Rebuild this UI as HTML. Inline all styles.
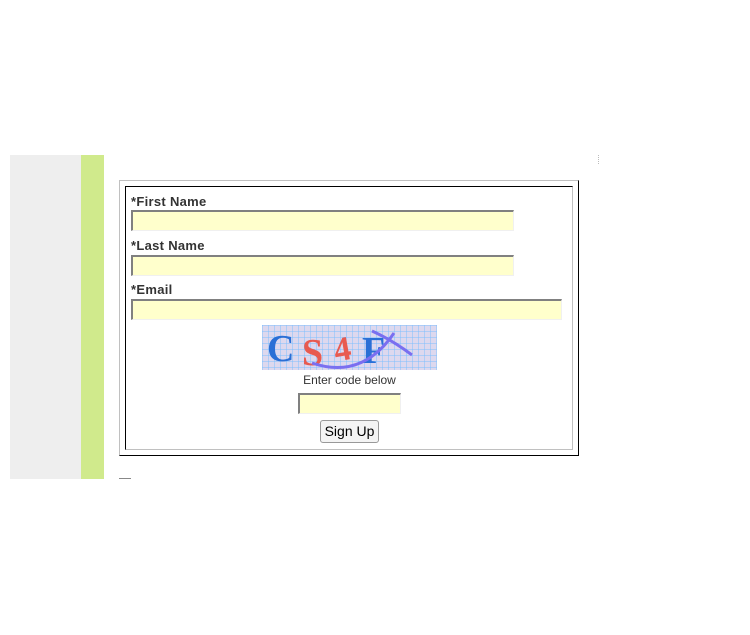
<!DOCTYPE html>
<html><head><style>
body{margin:0;background:#fff;width:750px;height:635px;overflow:hidden;position:relative;font-family:"Liberation Sans",sans-serif}
.a{position:absolute}
.lbl{position:absolute;left:131px;font-size:13px;font-weight:bold;color:#333;letter-spacing:0.3px}
.inp{position:absolute;left:131px;height:18px;background:#ffffcc;border-top:2px solid #808080;border-left:2px solid #808080;border-right:1px solid #f0f0f0;border-bottom:1px solid #f0f0f0}
</style></head><body>
<div class="a" style="left:10px;top:155px;width:71px;height:324px;background:#eeeeee"></div>
<div class="a" style="left:81px;top:155px;width:23px;height:324px;background:#d0ea8c"></div>
<div class="a" style="left:598px;top:155px;width:1px;height:9px;border-left:1px dotted #bbb"></div>
<div class="a" style="left:119px;top:180px;width:458px;height:274px;border-top:1px solid #c0c0c0;border-left:1px solid #c0c0c0;border-right:1px solid #000;border-bottom:1px solid #000"></div>
<div class="a" style="left:125px;top:186px;width:446px;height:262px;border-top:1px solid #000;border-left:1px solid #000;border-right:1px solid #c0c0c0;border-bottom:1px solid #c0c0c0"></div>
<div class="lbl" style="top:194px">*First Name</div>
<div class="inp" style="top:210px;width:380px"></div>
<div class="lbl" style="top:238px">*Last Name</div>
<div class="inp" style="top:255px;width:380px"></div>
<div class="lbl" style="top:282px">*Email</div>
<div class="inp" style="top:299px;width:428px"></div>
<svg class="a" style="left:262px;top:325px" width="175" height="45">
<defs><pattern id="g" width="6" height="6" patternUnits="userSpaceOnUse"><rect width="6" height="6" fill="#ddd8ee"/><path d="M0 0V6M0 0H6" stroke="#7fbfff" stroke-width="1"/></pattern></defs>
<rect width="175" height="45" fill="url(#g)"/>
<text x="5" y="36" font-family="Liberation Serif" font-weight="bold" font-size="38" fill="#2a6fd6">C</text>
<text x="40" y="40" font-family="Liberation Serif" font-weight="bold" font-size="38" fill="#e85a50">S</text>
<text x="72" y="35" font-family="Liberation Serif" font-weight="bold" font-size="34" fill="#e85a50" transform="rotate(-10 82 25)">4</text>
<text x="100" y="38" font-family="Liberation Serif" font-weight="bold" font-size="38" fill="#2a6fd6">F</text>
<path d="M50 38Q100 55 132 8" stroke="#7a6ff0" stroke-width="3" fill="none"/>
<path d="M110 6Q130 15 150 30" stroke="#7a6ff0" stroke-width="3" fill="none"/>
</svg>
<div class="a" style="left:262px;top:373px;width:175px;text-align:center;font-size:12px;color:#333">Enter code below</div>
<div class="inp" style="left:298px;top:393px;width:100px;height:18px"></div>
<div class="a" style="left:320px;top:420px;width:57px;height:21px;border:1px solid #999;border-radius:3px;background:#f4f4f4;font-size:14px;text-align:center;line-height:21px;color:#000">Sign Up</div>
<div class="a" style="left:119px;top:478px;width:12px;height:1px;background:#888"></div>
</body></html>
